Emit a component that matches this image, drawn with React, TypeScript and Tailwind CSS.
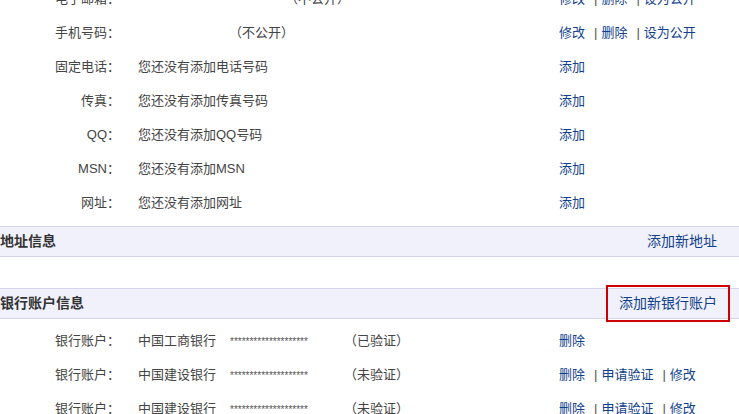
import React from 'react';

const contactRows: { label: string; value: React.ReactNode; actions: string[] }[] = [
  {
    label: '电子邮箱：',
    value: <span className="pl-[147px]">（不公开）</span>,
    actions: ['修改', '删除', '设为公开'],
  },
  {
    label: '手机号码：',
    value: <span className="pl-[91px]">（不公开）</span>,
    actions: ['修改', '删除', '设为公开'],
  },
  { label: '固定电话：', value: '您还没有添加电话号码', actions: ['添加'] },
  { label: '传真：', value: '您还没有添加传真号码', actions: ['添加'] },
  { label: 'QQ：', value: '您还没有添加QQ号码', actions: ['添加'] },
  { label: 'MSN：', value: '您还没有添加MSN', actions: ['添加'] },
  { label: '网址：', value: '您还没有添加网址', actions: ['添加'] },
];

const bankRows = [
  { bank: '中国工商银行', state: '（已验证）', actions: ['删除'] },
  { bank: '中国建设银行', state: '（未验证）', actions: ['删除', '申请验证', '修改'] },
  { bank: '中国建设银行', state: '（未验证）', actions: ['删除', '申请验证', '修改'] },
];

function Actions({ items }: { items: string[] }) {
  return (
    <div className="flex items-center">
      {items.map((a, i) => (
        <React.Fragment key={i}>
          {i > 0 && <span className="ml-[9px] mr-[4px] text-[#555]">|</span>}
          <a className="text-[#123f8c] cursor-pointer">{a}</a>
        </React.Fragment>
      ))}
    </div>
  );
}

function Row({ label, children, actions }: { label: string; children: React.ReactNode; actions: string[] }) {
  return (
    <div className="flex h-[34px] items-center">
      <div className="w-[120px] text-right text-[#444]">{label}</div>
      <div className="ml-[18px] w-[421px] text-[#444] whitespace-nowrap">{children}</div>
      <Actions items={actions} />
    </div>
  );
}

function SectionHeader({ title, link, boxed }: { title: string; link: string; boxed?: boolean }) {
  return (
    <div className="flex h-[31px] items-center justify-between border-y border-[#d3d5ee] bg-[#f0f1fb]">
      <span className="text-[14px] font-bold text-[#333]">{title}</span>
      <span className="relative mr-[22px] text-[14px] text-[#123f8c] cursor-pointer">
        {link}
        {boxed && (
          <span className="absolute left-[-13px] right-[-13px] top-[-8px] bottom-[-8px] border-2 border-[#cc0000]" />
        )}
      </span>
    </div>
  );
}

export default function App() {
  return (
    <div
      className="h-[414px] w-[739px] overflow-hidden bg-white text-[13px]"
      style={{ fontFamily: '"Liberation Sans", "Noto Sans CJK SC", sans-serif' }}
    >
      <div className="mt-[-18px]">
        {contactRows.map((r, i) => (
          <Row key={i} label={r.label} actions={r.actions}>
            {r.value}
          </Row>
        ))}
      </div>

      <div className="mt-[6px]">
        <SectionHeader title="地址信息" link="添加新地址" />
      </div>

      <div className="mt-[31px]">
        <SectionHeader title="银行账户信息" link="添加新银行账户" boxed />
      </div>

      <div className="mt-[5px]">
        {bankRows.map((b, i) => (
          <Row key={i} label="银行账户：" actions={b.actions}>
            <span className="flex items-center">
              <span>{b.bank}</span>
              <span className="ml-[14px] w-[114px] text-[10px] text-[#555]">
                ********************
              </span>
              <span>{b.state}</span>
            </span>
          </Row>
        ))}
      </div>
    </div>
  );
}
